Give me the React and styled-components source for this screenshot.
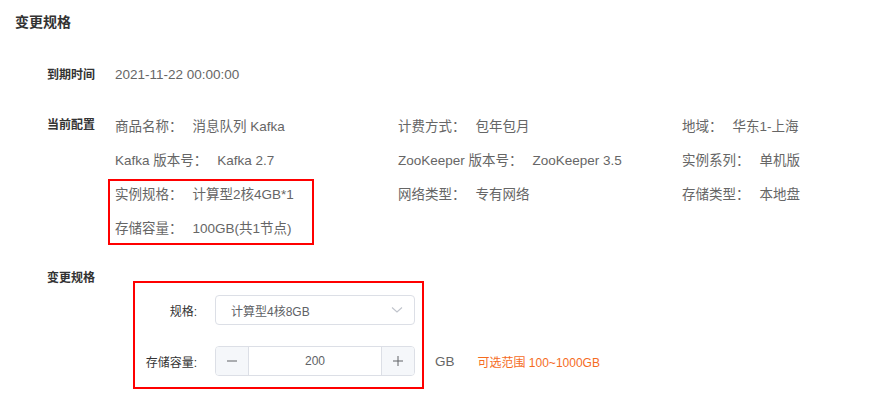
import React from "react";
import styled, { createGlobalStyle } from "styled-components";

const GlobalStyle = createGlobalStyle`
  body {
    margin: 0;
    background: #fff;
    font-family: "Liberation Sans", "Noto Sans CJK SC", sans-serif;
  }
`;

const Page = styled.div`
  padding: 12px 15px 0;
`;

const Title = styled.h3`
  margin: 0;
  font-size: 14px;
  line-height: 20px;
  font-weight: 700;
  color: #333;
`;

const Block = styled.div`
  display: grid;
  grid-template-columns: 68px 1fr;
  margin-left: 32px;
  margin-top: ${(p) => p.$top}px;
`;

const BlockLabel = styled.div`
  font-size: 12px;
  font-weight: 700;
  color: #333;
  line-height: ${(p) => p.$lh || 34}px;
`;

const Value = styled.div`
  font-size: 13.5px;
  color: #666;
  line-height: 20px;
`;

const InfoGrid = styled.div`
  position: relative;
  display: grid;
  grid-template-columns: 283px 284px 1fr;
  grid-auto-rows: 34px;
  align-items: center;
`;

const Item = styled.div`
  font-size: 13.5px;
  color: #666;
  white-space: nowrap;
`;

const ItemVal = styled.span`
  margin-left: 10px;
`;

// red annotation frame drawn over the content
const Highlight = styled.div`
  position: absolute;
  box-sizing: border-box;
  border: 2px solid #f00;
  left: ${(p) => p.$left}px;
  top: ${(p) => p.$top}px;
  width: ${(p) => p.$w}px;
  height: ${(p) => p.$h}px;
  pointer-events: none;
`;

const ChangeBody = styled.div`
  padding-top: 20px;
`;

const Form = styled.div`
  position: relative;
  margin-left: 18px;
  padding: 14px 0 13px;
  display: flex;
  flex-direction: column;
  gap: 21px;
`;

const FormRow = styled.div`
  display: flex;
  align-items: center;
  height: 30px;
`;

const FormLabel = styled.label`
  width: 64px;
  margin-right: 18px;
  text-align: right;
  font-size: 12px;
  color: #333;
`;

const Select = styled.div`
  box-sizing: border-box;
  width: 200px;
  height: 30px;
  border: 1px solid #dcdfe6;
  border-radius: 4px;
  padding: 0 11px 0 15px;
  display: flex;
  align-items: center;
  justify-content: space-between;
  font-size: 12px;
  color: #606266;
`;

const Stepper = styled.div`
  box-sizing: border-box;
  width: 200px;
  height: 30px;
  border: 1px solid #dcdfe6;
  border-radius: 4px;
  display: flex;
  overflow: hidden;
`;

const StepBtn = styled.div`
  width: 32px;
  background: #f5f7fa;
  display: flex;
  align-items: center;
  justify-content: center;
  border-${(p) => (p.$side === "left" ? "right" : "left")}: 1px solid #dcdfe6;
`;

const StepValue = styled.div`
  flex: 1;
  display: flex;
  align-items: center;
  justify-content: center;
  font-size: 12px;
  color: #606266;
`;

const Suffix = styled.span`
  margin-left: 20px;
  font-size: 13.5px;
  color: #666;
`;

const Hint = styled.span`
  margin-left: 23px;
  font-size: 12px;
  color: #f56c1e;
  white-space: nowrap;
`;

const info = [
  ["商品名称：", "消息队列 Kafka"],
  ["计费方式：", "包年包月"],
  ["地域：", "华东1-上海"],
  ["Kafka 版本号：", "Kafka 2.7"],
  ["ZooKeeper 版本号：", "ZooKeeper 3.5"],
  ["实例系列：", "单机版"],
  ["实例规格：", "计算型2核4GB*1"],
  ["网络类型：", "专有网络"],
  ["存储类型：", "本地盘"],
  ["存储容量：", "100GB(共1节点)"],
];

const Chevron = () => (
  <svg width="12" height="8" viewBox="0 0 12 8">
    <polyline points="1,1.5 6,6 11,1.5" fill="none" stroke="#c0c4cc" strokeWidth="1.1" />
  </svg>
);

const Minus = () => (
  <svg width="12" height="12" viewBox="0 0 12 12">
    <line x1="1" y1="6" x2="11" y2="6" stroke="#606266" strokeWidth="1" />
  </svg>
);

const Plus = () => (
  <svg width="12" height="12" viewBox="0 0 12 12">
    <line x1="1" y1="6" x2="11" y2="6" stroke="#606266" strokeWidth="1" />
    <line x1="6" y1="1" x2="6" y2="11" stroke="#606266" strokeWidth="1" />
  </svg>
);

export default function App() {
  return (
    <Page>
      <GlobalStyle />
      <Title>变更规格</Title>

      <Block $top={33}>
        <BlockLabel $lh={20}>到期时间</BlockLabel>
        <Value>2021-11-22 00:00:00</Value>
      </Block>

      <Block $top={23}>
        <BlockLabel>当前配置</BlockLabel>
        <InfoGrid>
          {info.map(([k, v]) => (
            <Item key={k}>
              {k}
              <ItemVal>{v}</ItemVal>
            </Item>
          ))}
          <Highlight $left={-7} $top={71} $w={206} $h={66} />
        </InfoGrid>
      </Block>

      <Block $top={17}>
        <BlockLabel>变更规格</BlockLabel>
        <ChangeBody>
          <Form>
            <FormRow>
              <FormLabel>规格:</FormLabel>
              <Select>
                <span>计算型4核8GB</span>
                <Chevron />
              </Select>
            </FormRow>
            <FormRow>
              <FormLabel>存储容量:</FormLabel>
              <Stepper>
                <StepBtn $side="left">
                  <Minus />
                </StepBtn>
                <StepValue>200</StepValue>
                <StepBtn $side="right">
                  <Plus />
                </StepBtn>
              </Stepper>
              <Suffix>GB</Suffix>
              <Hint>可选范围 100~1000GB</Hint>
            </FormRow>
            <Highlight $left={0} $top={0} $w={291} $h={108} />
          </Form>
        </ChangeBody>
      </Block>
    </Page>
  );
}
